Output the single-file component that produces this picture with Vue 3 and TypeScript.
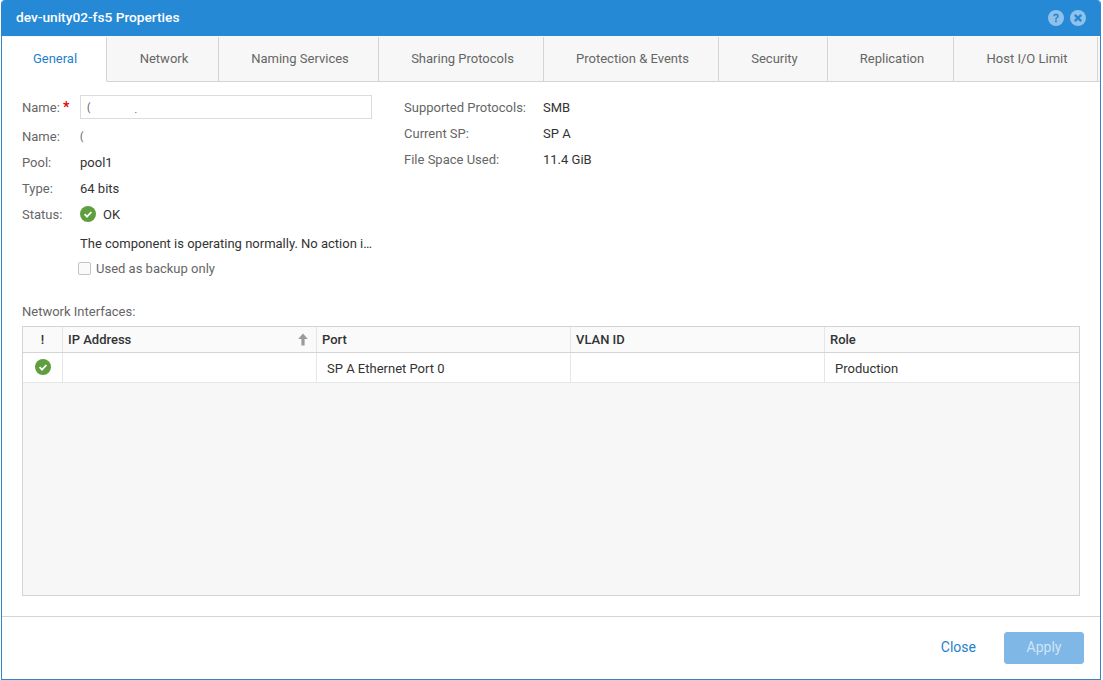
<template>
  <div class="dialog">
    <header class="title-bar">
      <span class="title">dev-unity02-fs5 Properties</span>
      <div class="title-icons">
        <svg class="round-icon" viewBox="0 0 16 16">
          <circle cx="8" cy="8" r="8" fill="#8fc1ea" />
          <path d="M5.2 6.2C5.2 4.6 6.5 3.6 8 3.6s2.8.9 2.8 2.5c0 1.1-.6 1.7-1.4 2.2-.6.4-.7.7-.7 1.4H7.1c0-1.1.3-1.7 1-2.2.6-.4.9-.7.9-1.3 0-.6-.4-1-1-1s-1.1.4-1.1 1z" fill="#2589d6" />
          <rect x="7.1" y="10.5" width="1.7" height="1.8" fill="#2589d6" />
        </svg>
        <svg class="round-icon" viewBox="0 0 16 16">
          <circle cx="8" cy="8" r="8" fill="#8fc1ea" />
          <path d="M4.8 4.8l6.4 6.4M11.2 4.8l-6.4 6.4" stroke="#2589d6" stroke-width="2.4" fill="none" />
        </svg>
      </div>
    </header>

    <nav class="tabs">
      <div
        v-for="tab in tabs"
        :key="tab.label"
        :class="['tab', { active: tab.label === 'General' }]"
        :style="{ width: tab.width + 'px' }"
      >
        {{ tab.label }}
      </div>
      <div class="tabs-rest"></div>
    </nav>

    <main class="body">
      <section class="form">
        <div class="form-left">
          <div class="row name-row">
            <label>Name: <span class="req">*</span></label>
            <div class="text-input">
              <span class="mask">(</span>
              <span class="mask mask-dot">.</span>
            </div>
          </div>
          <div class="row">
            <label>Name:</label>
            <span class="mask">(</span>
          </div>
          <div class="row">
            <label>Pool:</label>
            <span>pool1</span>
          </div>
          <div class="row">
            <label>Type:</label>
            <span>64 bits</span>
          </div>
          <div class="row">
            <label>Status:</label>
            <span class="status">
              <svg class="ok-icon" viewBox="0 0 16 16">
                <circle cx="8" cy="8" r="8" fill="#5f9e3f" />
                <path d="M4.6 8.2l2.4 2.4 4.4-4.6" stroke="#fff" stroke-width="1.8" fill="none" />
              </svg>
              OK
            </span>
          </div>
          <div class="row desc-row">
            <label></label>
            <span>The component is operating normally. No action i…</span>
          </div>
          <div class="row check-row">
            <label></label>
            <span class="check-wrap">
              <span class="checkbox"></span>
              Used as backup only
            </span>
          </div>
        </div>
        <div class="form-right">
          <div v-for="item in summary" :key="item.label" class="row right-row">
            <label>{{ item.label }}</label>
            <span>{{ item.value }}</span>
          </div>
        </div>
      </section>

      <div class="grid-label">Network Interfaces:</div>
      <div class="grid">
        <div class="grid-head">
          <div class="cell icon-cell">!</div>
          <div class="cell ip-cell">
            IP Address
            <svg class="sort" viewBox="0 0 10 13">
              <path d="M5 0.5L9.8 6H6.6V12.5H3.4V6H0.2z" fill="#9a9a9a" />
            </svg>
          </div>
          <div class="cell">Port</div>
          <div class="cell">VLAN ID</div>
          <div class="cell last">Role</div>
        </div>
        <div class="grid-row">
          <div class="cell icon-cell">
            <svg class="ok-icon" viewBox="0 0 16 16">
              <circle cx="8" cy="8" r="8" fill="#5f9e3f" />
              <path d="M4.6 8.2l2.4 2.4 4.4-4.6" stroke="#fff" stroke-width="1.8" fill="none" />
            </svg>
          </div>
          <div class="cell ip-cell"></div>
          <div class="cell text-cell">SP A Ethernet Port 0</div>
          <div class="cell"></div>
          <div class="cell last text-cell">Production</div>
        </div>
      </div>
    </main>

    <footer class="footer">
      <button class="link-btn">Close</button>
      <button class="apply-btn" disabled>Apply</button>
    </footer>
  </div>
</template>

<script setup lang="ts">
const tabs = [
  { label: 'General', width: 105 },
  { label: 'Network', width: 112 },
  { label: 'Naming Services', width: 160 },
  { label: 'Sharing Protocols', width: 165 },
  { label: 'Protection & Events', width: 175 },
  { label: 'Security', width: 109 },
  { label: 'Replication', width: 126 },
  { label: 'Host I/O Limit', width: 144 }
]

const summary = [
  { label: 'Supported Protocols:', value: 'SMB' },
  { label: 'Current SP:', value: 'SP A' },
  { label: 'File Space Used:', value: '11.4 GiB' }
]
</script>

<style scoped>
.dialog {
  width: 1100px;
  height: 680px;
  margin-left: 1px;
  box-sizing: border-box;
  border: 1px solid #2f86cc;
  border-top: none;
  border-radius: 4px 4px 0 0;
  background: #fff;
  display: flex;
  flex-direction: column;
  font-family: Roboto, sans-serif;
  font-size: 13px;
  color: #333;
  overflow: hidden;
}

.title-bar {
  height: 36px;
  flex: none;
  background: #2589d6;
  color: #fff;
  display: flex;
  align-items: center;
  justify-content: space-between;
  padding: 0 14px;
}

.title {
  font-size: 13.7px;
  font-weight: 500;
  margin-bottom: 2px;
}

.title-icons {
  display: flex;
  gap: 6px;
}

.round-icon {
  width: 16px;
  height: 16px;
  display: block;
}

.tabs {
  height: 46px;
  flex: none;
  display: flex;
  background: #f7f7f7;
}

.tab {
  box-sizing: border-box;
  display: flex;
  align-items: center;
  justify-content: center;
  padding: 0 0 2px 3px;
  color: #666;
  border-right: 1px solid #d4d4d4;
  border-bottom: 1px solid #d4d4d4;
  margin-top: 1px;
}

.tab.active {
  background: #fff;
  color: #1f7fd0;
  border-bottom-color: #fff;
  padding-left: 2px;
}

.tabs-rest {
  flex: 1;
  border-bottom: 1px solid #d4d4d4;
  margin-top: 1px;
}

.body {
  flex: 1;
  min-height: 0;
  padding: 12px 20px 20px;
  display: flex;
  flex-direction: column;
}

.form {
  display: flex;
  height: 208px;
  flex: none;
}

.form-left {
  width: 350px;
  margin-right: 32px;
  padding-top: 1px;
  flex: none;
}

.row {
  display: flex;
  align-items: center;
  height: 26px;
}

.row label {
  width: 58px;
  flex: none;
  color: #666;
}

.name-row {
  height: 24px;
  margin-bottom: 4px;
}

.req {
  color: #e60000;
  font-weight: 700;
  font-size: 14px;
  line-height: 13px;
}

.text-input {
  width: 292px;
  height: 24px;
  box-sizing: border-box;
  border: 1px solid #dcdcdc;
  padding-left: 6px;
  display: flex;
  align-items: center;
}

.mask {
  color: #555;
  font-size: 10px;
}

.mask-dot {
  margin-left: 44px;
  padding-top: 5px;
}

.status {
  display: flex;
  align-items: center;
  gap: 7px;
}

.ok-icon {
  width: 16px;
  height: 16px;
  display: block;
}

.desc-row {
  height: 32px;
}

.check-row {
  height: 18px;
}

.check-row label {
  width: 56px;
}

.check-wrap {
  display: flex;
  align-items: center;
  gap: 5px;
  color: #666;
}

.checkbox {
  width: 13px;
  height: 13px;
  box-sizing: border-box;
  border: 1px solid #c4c4c4;
  border-radius: 2px;
  background: #fafafa;
}

.right-row label {
  width: 139px;
}

.grid-label {
  color: #666;
  height: 24px;
  line-height: 20px;
}

.grid {
  flex: 1;
  min-height: 0;
  border: 1px solid #d4d4d4;
  background: #f7f7f7;
}

.grid-head,
.grid-row {
  display: grid;
  grid-template-columns: 40px 254px 254px 254px 1fr;
  background: #fff;
}

.grid-head {
  height: 26px;
  border-bottom: 1px solid #d4d4d4;
  box-sizing: border-box;
  background: #fafafa;
  font-weight: 500;
}

.grid-row {
  height: 30px;
  border-bottom: 1px solid #e6e6e6;
  box-sizing: border-box;
}

.cell {
  display: flex;
  align-items: center;
  padding-left: 5px;
  border-right: 1px solid #e6e6e6;
  min-width: 0;
}

.grid-row .cell {
  padding-left: 10px;
}

.grid-row .text-cell {
  padding-top: 2px;
}

.grid-row .icon-cell {
  padding: 0 0 2px;
}

.cell.last {
  border-right: none;
}

.icon-cell {
  justify-content: center;
  padding: 0;
}

.ip-cell {
  justify-content: space-between;
  padding-right: 8px;
}

.sort {
  width: 10px;
  height: 13px;
}

.footer {
  height: 63px;
  flex: none;
  box-sizing: border-box;
  border-top: 1px solid #d4d4d4;
  display: flex;
  align-items: center;
  justify-content: flex-end;
  padding: 0 16px 0 0;
  gap: 28px;
}

.link-btn {
  border: none;
  background: none;
  font: inherit;
  font-size: 14px;
  color: #1f7fd0;
  padding: 0 0 2px;
}

.apply-btn {
  width: 80px;
  height: 32px;
  border: 1px solid #7fb8e6;
  border-radius: 3px;
  background: #7fb8e6;
  color: #cfe5f7;
  font: inherit;
  font-size: 14px;
  padding: 0 0 2px;
}
</style>

<style>
html, body {
  background: #fff;
  overflow: hidden;
}
</style>
